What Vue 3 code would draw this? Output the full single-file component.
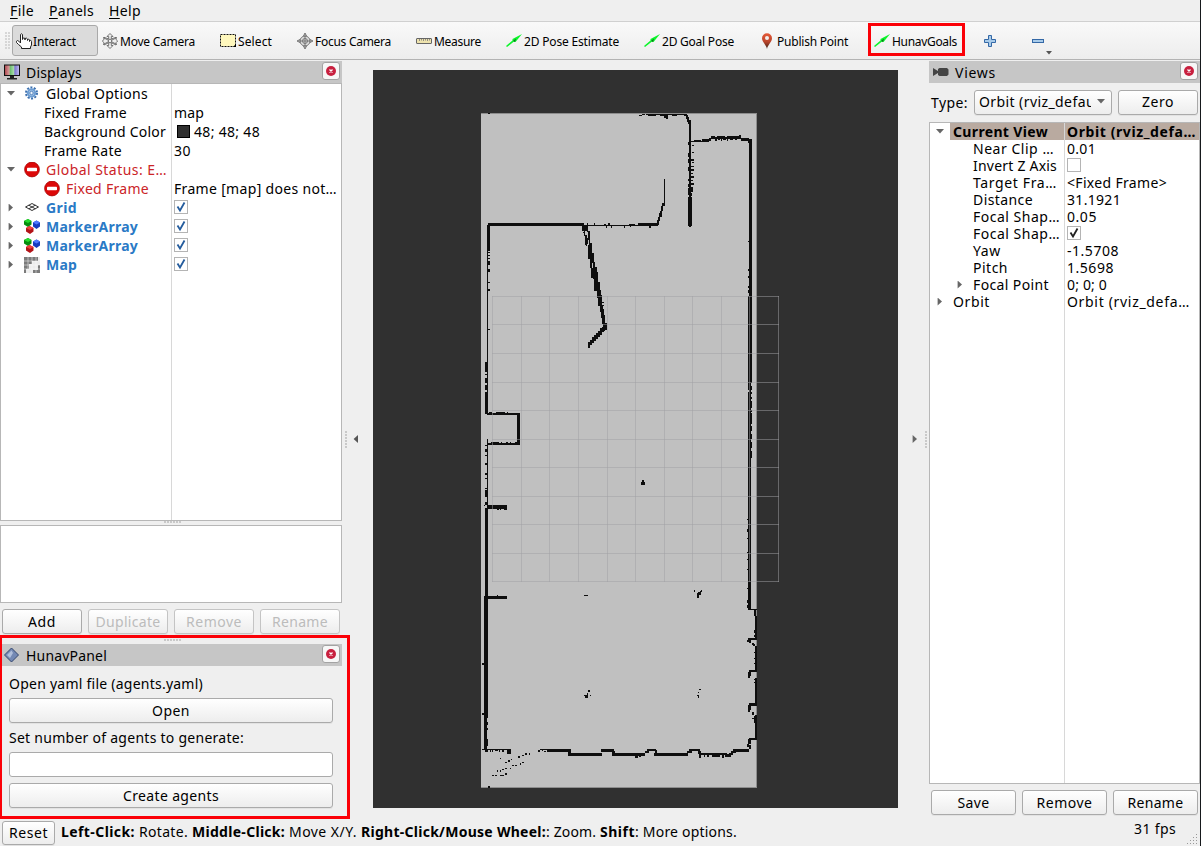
<script setup>
// Spreads a label evenly so that it occupies the given width in pixels.
const vFit = {
  mounted(el, { value }) {
    if (!value) return
    const natural = el.getBoundingClientRect().width
    el.style.letterSpacing = (value - natural) / el.textContent.length + 'px'
  },
}

const menus = [
  { key: 'F', rest: 'ile', w: 24 },
  { key: 'P', rest: 'anels', w: 45 },
  { key: 'H', rest: 'elp', w: 32 },
]

const tools = [
  { icon: 'hand', text: 'Interact', w: 43, active: true },
  { icon: 'move', text: 'Move Camera', w: 75 },
  { icon: 'select', text: 'Select', w: 34 },
  { icon: 'focus', text: 'Focus Camera', w: 76 },
  { icon: 'ruler', text: 'Measure', w: 47 },
  { icon: 'arrow', text: '2D Pose Estimate', w: 95 },
  { icon: 'arrow', text: '2D Goal Pose', w: 72 },
  { icon: 'pin', text: 'Publish Point', w: 71 },
  { icon: 'arrow', text: 'HunavGoals', w: 65, marked: true },
  { icon: 'plus', text: '' },
  { icon: 'minus', text: '' },
]

const displays = [
  { arrow: 'down', icon: 'gear', text: 'Global Options', w: 102 },
  { text: 'Fixed Frame', w: 83, value: 'map', vw: 30 },
  { text: 'Background Color', w: 122, value: '48; 48; 48', vw: 66, swatch: true },
  { text: 'Frame Rate', w: 78, value: '30', vw: 17 },
  { arrow: 'down', icon: 'error', text: 'Global Status: E…', w: 121, tone: 'red' },
  { icon: 'error', nested: true, text: 'Fixed Frame', w: 83, tone: 'red', value: 'Frame [map] does not…', vw: 163 },
  { arrow: 'right', icon: 'grid', text: 'Grid', w: 31, tone: 'blue', check: true },
  { arrow: 'right', icon: 'cubes', text: 'MarkerArray', w: 92, tone: 'blue', check: true },
  { arrow: 'right', icon: 'cubes', text: 'MarkerArray', w: 92, tone: 'blue', check: true },
  { arrow: 'right', icon: 'map', text: 'Map', w: 31, tone: 'blue', check: true },
]

const views = [
  { arrow: 'down', text: 'Current View', w: 95, value: 'Orbit (rviz_defa…', vw: 129, head: true },
  { sub: true, text: 'Near Clip …', w: 81, value: '0.01', vw: 29 },
  { sub: true, text: 'Invert Z Axis', w: 84, box: true },
  { sub: true, text: 'Target Fra…', w: 84, value: '<Fixed Frame>', vw: 100 },
  { sub: true, text: 'Distance', w: 60, value: '31.1921', vw: 54 },
  { sub: true, text: 'Focal Shap…', w: 87, value: '0.05', vw: 30 },
  { sub: true, text: 'Focal Shap…', w: 87, box: true, checked: true },
  { sub: true, text: 'Yaw', w: 28, value: '-1.5708', vw: 52 },
  { sub: true, text: 'Pitch', w: 35, value: '1.5698', vw: 47 },
  { sub: true, arrow: 'right', text: 'Focal Point', w: 76, value: '0; 0; 0', vw: 40 },
  { arrow: 'right', text: 'Orbit', w: 37, value: 'Orbit (rviz_defa…', vw: 123 },
]

const hints = [
  { b: true, text: 'Left-Click: ', w: 78 },
  { text: 'Rotate. ', w: 53 },
  { b: true, text: 'Middle-Click: ', w: 97 },
  { text: 'Move X/Y. ', w: 72 },
  { b: true, text: 'Right-Click/Mouse Wheel:', w: 185 },
  { text: ': Zoom. ', w: 54 },
  { b: true, text: 'Shift', w: 35 },
  { text: ': More options.', w: 102 },
]

const gridX = [492.5, 521.5, 549.5, 578.5, 607, 635.5, 664, 692.5, 721.5, 749.5, 778.5]
const gridY = [296.5, 324.5, 353.5, 382, 410.5, 439, 467.5, 496.5, 524.5, 553.5, 581.5]

// Occupied cells of the floor plan: x, y, width, height.
const walls = [
  [639, 115, 3, 1], [642, 114, 3, 1], [646, 114, 38, 1], [648, 115, 8, 1], [660, 115, 8, 1], [672, 115, 5, 1],
  [664, 116, 4, 2], [666, 118, 2, 1], [684, 114, 3, 2], [686, 115, 2, 4], [687, 117, 2, 5], [688, 120, 3, 4],
  [689, 124, 2, 103], [688, 142, 2, 3], [688, 153, 1, 4], [688, 159, 2, 4], [688, 167, 3, 4], [688, 179, 2, 2],
  [688, 184, 2, 3], [688, 188, 1, 7], [688, 197, 4, 29], [691, 141, 2, 1], [692, 145, 2, 1], [692, 152, 2, 1],
  [691, 159, 3, 2], [692, 162, 2, 1], [691, 166, 3, 1], [691, 169, 3, 2], [691, 173, 2, 1], [691, 176, 3, 2],
  [691, 180, 2, 1], [691, 183, 3, 2], [691, 187, 2, 5], [691, 193, 1, 3],
  [692, 141, 17, 1], [694, 140, 7, 1], [702, 139, 7, 2], [709, 138, 2, 3], [711, 136, 4, 3], [715, 137, 26, 2],
  [717, 136, 8, 1], [727, 136, 14, 1], [739, 135, 2, 3], [715, 139, 2, 2], [718, 139, 2, 1], [721, 139, 1, 2],
  [723, 139, 3, 1], [727, 139, 1, 2], [730, 139, 3, 1], [735, 139, 2, 1], [741, 138, 8, 3], [748, 139, 4, 4],
  [749, 142, 3, 216], [748, 241, 1, 1], [748, 269, 1, 2], [748, 276, 1, 2], [748, 286, 1, 2], [748, 290, 1, 3],
  [748, 296, 1, 94], [748, 392, 3, 218], [749, 358, 2, 34], [751, 354, 1, 29], [751, 386, 1, 4], [751, 392, 1, 2],
  [751, 397, 1, 2], [751, 401, 1, 7], [751, 410, 1, 2], [751, 413, 1, 11], [751, 426, 1, 5], [751, 434, 1, 5],
  [751, 442, 1, 6], [751, 451, 1, 7], [747, 519, 1, 1], [747, 529, 1, 3], [747, 538, 1, 1], [747, 552, 1, 1],
  [747, 559, 1, 1], [747, 569, 1, 1], [747, 588, 1, 1], [747, 600, 1, 3], [747, 605, 1, 3],
  [748, 609, 9, 1], [754, 610, 2, 6], [755, 616, 2, 22], [754, 630, 2, 3], [754, 635, 1, 2], [748, 638, 9, 2],
  [747, 640, 4, 2], [749, 641, 2, 2], [752, 643, 2, 2], [753, 644, 2, 2], [755, 646, 2, 24], [754, 652, 1, 1],
  [754, 658, 1, 1], [754, 663, 1, 1], [749, 670, 8, 2], [748, 672, 3, 4], [748, 675, 2, 3], [754, 679, 1, 1],
  [754, 682, 1, 1], [755, 678, 2, 25], [749, 703, 8, 3], [748, 705, 3, 5], [748, 709, 2, 3], [752, 712, 2, 3],
  [754, 716, 2, 7], [752, 718, 2, 1], [755, 715, 2, 24], [749, 738, 8, 2], [748, 739, 3, 5], [747, 744, 2, 3], [749, 745, 2, 4],
  [733, 749, 16, 3], [731, 751, 5, 2], [729, 753, 4, 2], [727, 754, 4, 3], [699, 753, 2, 5], [701, 753, 26, 2],
  [704, 755, 1, 2], [707, 755, 2, 2], [712, 755, 8, 2], [722, 755, 2, 3], [725, 755, 2, 2],
  [689, 749, 11, 2], [687, 751, 5, 2], [698, 751, 3, 3], [654, 753, 34, 3], [647, 749, 9, 2], [645, 751, 4, 2],
  [655, 750, 2, 4], [612, 753, 33, 3], [635, 756, 3, 2], [639, 756, 2, 1], [601, 749, 13, 3], [612, 751, 3, 3],
  [568, 753, 34, 3], [568, 749, 3, 5], [547, 749, 22, 3], [540, 749, 7, 1], [542, 750, 1, 1], [538, 750, 2, 2],
  [544, 751, 2, 1], [482, 749, 28, 1], [485, 750, 3, 2], [490, 750, 1, 2], [492, 750, 1, 2], [495, 750, 3, 1],
  [499, 750, 1, 2], [502, 750, 2, 2], [507, 749, 4, 5],
  [484, 598, 3, 151], [487, 596, 1, 122], [487, 722, 1, 3], [487, 728, 1, 2], [487, 739, 1, 7],
  [482, 663, 2, 2], [482, 713, 2, 2], [485, 508, 3, 90], [487, 505, 20, 4], [497, 509, 2, 1], [500, 509, 1, 1],
  [504, 509, 3, 1], [487, 596, 20, 3], [497, 595, 1, 1], [484, 505, 1, 1], [484, 596, 1, 2],
  [487, 225, 1, 190], [488, 225, 2, 18], [488, 243, 2, 8], [488, 252, 2, 1], [488, 255, 2, 1], [488, 258, 2, 1],
  [488, 261, 2, 4], [488, 269, 2, 3], [488, 282, 2, 1], [488, 289, 2, 2], [488, 329, 2, 1],
  [485, 362, 3, 10], [485, 374, 2, 1], [485, 378, 2, 5], [485, 385, 2, 5], [485, 392, 3, 22],
  [487, 413, 33, 2], [489, 412, 3, 1], [496, 412, 9, 1], [507, 412, 1, 1], [517, 413, 3, 32], [487, 443, 33, 2],
  [491, 442, 8, 1], [501, 442, 1, 1], [506, 442, 2, 1], [510, 442, 1, 1], [515, 442, 3, 1],
  [487, 439, 1, 68], [485, 445, 2, 1], [485, 449, 2, 3], [485, 455, 2, 1], [485, 463, 2, 2], [485, 473, 2, 2],
  [485, 478, 2, 1], [485, 488, 2, 1], [485, 490, 2, 7], [485, 502, 2, 3],
  [488, 223, 96, 3], [582, 225, 3, 6], [584, 225, 54, 1], [587, 223, 1, 2], [594, 223, 1, 2], [604, 224, 2, 1],
  [608, 223, 2, 2], [606, 226, 1, 2], [611, 226, 1, 2], [624, 226, 1, 2], [630, 226, 1, 1], [629, 224, 6, 1],
  [638, 223, 20, 3], [649, 226, 2, 2], [664, 179, 1, 25],
  [657, 220, 2, 5], [658, 217, 2, 4], [659, 213, 3, 4], [660, 211, 2, 3], [661, 206, 2, 5], [662, 203, 3, 3],
  [642, 480, 2, 3], [641, 482, 4, 3], [584, 595, 4, 1], [694, 590, 1, 2], [701, 590, 1, 2], [698, 592, 3, 3],
  [697, 593, 2, 5], [700, 591, 1, 2], [588, 690, 2, 2], [584, 695, 4, 1], [587, 693, 1, 4], [585, 696, 3, 2],
  [590, 695, 1, 1], [699, 689, 2, 1], [698, 692, 1, 1], [697, 695, 2, 1], [698, 696, 1, 2],
  [500, 758, 1, 1], [505, 762, 2, 1], [508, 760, 2, 2], [511, 759, 1, 1], [518, 756, 2, 2], [522, 755, 2, 1],
  [525, 753, 2, 2], [529, 753, 1, 2], [512, 765, 2, 1], [515, 765, 2, 1], [520, 763, 1, 2], [522, 762, 2, 1],
  [497, 770, 1, 2], [500, 770, 1, 2], [502, 769, 2, 1], [505, 768, 2, 1], [510, 768, 1, 1], [492, 775, 2, 1],
  [495, 775, 2, 1], [500, 775, 4, 1], [505, 773, 2, 2], [488, 786, 2, 2], [488, 113, 2, 1],
  // Slanted door
  [582, 226, 3, 5], [585, 225, 2, 6], [583, 232, 1, 1], [584, 231, 1, 5], [585, 235, 2, 6], [585, 240, 2, 5], [586, 244, 1, 2],
  [587, 226, 1, 6], [588, 231, 2, 9], [587, 238, 1, 6], [588, 245, 2, 8], [589, 239, 1, 8], [590, 243, 2, 10], [588, 252, 3, 7],
  [591, 253, 3, 10], [590, 258, 2, 10], [593, 262, 2, 8], [591, 268, 4, 10], [595, 267, 2, 8], [595, 272, 3, 5],
  [593, 276, 2, 3], [594, 277, 4, 14], [598, 282, 2, 9], [596, 285, 2, 6], [597, 290, 4, 8], [599, 295, 3, 11],
  [602, 302, 2, 1], [602, 305, 2, 1], [598, 298, 3, 8], [600, 306, 3, 6], [601, 309, 3, 9], [602, 315, 3, 9],
  [603, 323, 4, 7], [602, 327, 3, 4], [600, 328, 4, 4], [598, 331, 4, 4], [596, 333, 4, 4], [594, 335, 4, 4],
  [592, 337, 4, 4], [590, 340, 4, 3], [588, 342, 4, 3], [588, 345, 2, 3],
]
</script>

<template>
  <div class="app">
    <nav class="menubar">
      <span v-for="m in menus" :key="m.key" v-fit="m.w"><u>{{ m.key }}</u>{{ m.rest }}</span>
    </nav>

    <div class="toolbar">
      <i class="handle"></i>
      <div v-for="(t, i) in tools" :key="i" class="tool" :class="{ active: t.active, marked: t.marked }">
        <svg class="ticon" viewBox="0 0 16 16">
          <path v-if="t.icon === 'hand'" d="M4.500 10V1.500Q5.500 0 6.500 1.500V6.500V5.500Q8 4.500 9 5.500V7V5.500Q10.500 4.500 11.500 6V7.500V6.500Q13 5.500 13.500 7V8.500V7.500Q15 6.500 15.500 8.500V12L14.500 14V15.500H5.500V14L2.500 11.500L.5 9.500Q0 8 1.500 7.500Q2.500 7.500 4.500 10" fill="#fff" stroke="#222" stroke-width="1" />
          <g v-else-if="t.icon === 'move'" fill="#eee" stroke="#666" stroke-width=".9">
            <path d="M8 .5L11 3.500H9.300V6L14 4.300V6.500L15.700 8L14 9.700V12L9.300 9.700V12.500H11L8 15.500L5 12.500H6.700V9.700L2 12V9.700L.3 8L2 6.500V4.300L6.700 6V3.500H5Z" />
            <path d="M1 4.500L15 11.500M15 4.500L1 11.500" /><circle cx="8" cy="8" r="1.800" />
          </g>
          <g v-else-if="t.icon === 'select'">
            <rect x=".5" y="1.500" width="15" height="12" fill="#fff8bd" stroke="#111" stroke-dasharray="2 1" />
            <path d="M16 11V14H13Z" />
          </g>
          <g v-else-if="t.icon === 'focus'" fill="#ddd" stroke="#777">
            <circle cx="8" cy="8" r="5" /><circle cx="8" cy="8" r="2.500" />
            <path d="M8 3V13M3 8H13" /><path d="M6.500 3L8 0L9.500 3ZM6.500 13L8 16L9.500 13ZM3 6.500L0 8L3 9.500ZM13 6.500L16 8L13 9.500Z" fill="#bbb" />
          </g>
          <g v-else-if="t.icon === 'ruler'">
            <rect x=".5" y="5.500" width="15" height="5" rx=".5" fill="#eee3ae" stroke="#666" />
            <path d="M3.500 6V8M5.500 6V7.500M7.500 6V8M9.500 6V7.500M11.500 6V8M13.500 6V7.500" stroke="#777" stroke-width=".8" />
          </g>
          <g v-else-if="t.icon === 'arrow'">
            <path d="M0 13L6.500 7.500L6.500 6L16 1L9.500 9L8 8.500L1 14Z" fill="#0cf52b" />
            <path d="M7 8L10 5.500L9 9Z" fill="#067c18" />
          </g>
          <g v-else-if="t.icon === 'pin'">
            <path d="M8 16C7.500 12 3 9 3 5.200A5 5 0 0 1 13 5.200C13 9 8.500 12 8 16Z" fill="url(#pinfill)" />
            <circle cx="8" cy="5" r="2" fill="#f2efee" />
          </g>
          <path v-else-if="t.icon === 'plus'" d="M5.500 2.500H8.500V6.500H12.500V9.500H8.500V13.500H5.500V9.500H1.500V6.500H5.500Z" fill="#a8cbea" stroke="#3468a6" />
          <rect v-else x="1.500" y="6.500" width="11" height="3" fill="#a8cbea" stroke="#3468a6" />
        </svg>
        <span v-if="t.text" v-fit="t.w">{{ t.text }}</span>
        <svg v-if="t.icon === 'minus'" class="drop" viewBox="0 0 6 4"><path d="M0 0H6L3 3.500Z" fill="#555" /></svg>
      </div>
    </div>

    <svg width="0" height="0" class="defs">
      <defs>
        <linearGradient id="pinfill" x2="0" y2="1"><stop stop-color="#e65937" /><stop offset=".55" stop-color="#b9452c" /><stop offset="1" stop-color="#352014" /></linearGradient>
        <linearGradient id="scr"><stop stop-color="#ab4249" /><stop offset=".33" stop-color="#d9a1a1" /><stop offset=".34" stop-color="#62b967" /><stop offset=".66" stop-color="#b3e1b5" /><stop offset=".67" stop-color="#7770ce" /><stop offset="1" stop-color="#c6c2f0" /></linearGradient>
      </defs>
    </svg>

    <main class="body">
      <aside class="left">
        <header class="title">
          <svg width="16" height="16" viewBox="0 0 16 16"><rect x=".5" y="1" width="15" height="10.500" fill="url(#scr)" stroke="#111" /><path d="M6 12H10V14H13V15.500H3V14H6Z" fill="#222" /></svg>
          <span v-fit="56">Displays</span>
          <button class="close"><svg viewBox="0 0 10 10"><circle cx="5" cy="5" r="5" fill="#c8203f" /><path d="M3.500 3.500L6.500 6.500M6.500 3.500L3.500 6.500" stroke="#fff" stroke-width="1.300" /></svg></button>
        </header>

        <section class="tree disp">
          <div v-for="(r, i) in displays" :key="i" class="row">
            <div class="name" :class="[r.tone, { plain: !r.icon, nested: r.nested, bold: r.tone === 'blue' }]">
              <i class="tri" :class="r.arrow"></i>
              <svg v-if="r.icon" class="ricon" viewBox="0 0 16 16">
                <g v-if="r.icon === 'gear'" fill="none" stroke="#3b6fae">
                  <circle cx="7.500" cy="7" r="5.500" stroke-width="2" stroke-dasharray="2 1.450" />
                  <circle cx="7.500" cy="7" r="3.700" fill="#a9c8e9" stroke="#6d9dd2" stroke-width="2" />
                  <circle cx="7.500" cy="7" r="1.700" fill="#eef5fb" stroke="#3b6fae" stroke-width=".8" />
                </g>
                <g v-else-if="r.icon === 'error'">
                  <circle cx="8" cy="7.500" r="7.400" fill="#dc0808" stroke="#a80707" stroke-width=".8" />
                  <rect x="3" y="5.800" width="10" height="3.400" rx=".8" fill="#fff" />
                </g>
                <g v-else-if="r.icon === 'grid'" fill="none" stroke="#333" stroke-width="1">
                  <path d="M1.500 7L8 3.500L14.500 7L8 10.500ZM4.800 5.200L11.300 8.800M11.300 5.200L4.800 8.800" />
                </g>
                <g v-else-if="r.icon === 'cubes'">
                  <path d="M0 2L4 0L7.500 2V5.500L4 8L0 5.500Z" fill="#078d0e" /><path d="M0 2L4 0L7.500 2L4 4Z" fill="#25dd2e" />
                  <path d="M9 3.500L12.500 1.500L16 3.500V7.500L12.500 10L9 7.500Z" fill="#163bc0" /><path d="M9 3.500L12.500 1.500L16 3.500L12.500 5.500Z" fill="#4e78ff" />
                  <path d="M2 9L5.500 7L9.500 9V12.500L6 15L2 12.500Z" fill="#b31318" /><path d="M2 9L5.500 7L9.500 9L6 11Z" fill="#f03e3e" />
                </g>
                <g v-else>
                  <path d="M0 0H16V16H0Z" fill="#ececec" /><path d="M0 0H14V4H8V7H5V12H2V16H0ZM9 13H16V16H9ZM14 8H16V13H14Z" fill="#7b7b7b" />
                  <path d="M0 4H16M0 8H16M0 12H16M4 0V16M8 0V16M12 0V16" stroke="#fff" stroke-width=".5" />
                </g>
              </svg>
              <span v-fit="r.w">{{ r.text }}</span>
            </div>
            <div class="val">
              <i v-if="r.swatch" class="swatch"></i>
              <svg v-if="r.check" class="check" viewBox="0 0 14 14"><rect x=".5" y=".5" width="13" height="13" fill="#fff" stroke="#b4b4b4" /><path d="M3.500 6.500L6 10.500L10.500 2.500" fill="none" stroke="#245c9d" stroke-width="1.800" /></svg>
              <span v-if="r.value" v-fit="r.vw">{{ r.value }}</span>
            </div>
          </div>
        </section>

        <i class="dots"></i>
        <section class="desc"></section>
        <div class="btns">
          <button class="btn"><span v-fit="28">Add</span></button>
          <button class="btn off"><span v-fit="65">Duplicate</span></button>
          <button class="btn off"><span v-fit="56">Remove</span></button>
          <button class="btn off"><span v-fit="56">Rename</span></button>
        </div>

        <section class="hunav">
          <i class="dots"></i>
          <header class="title">
            <svg width="16" height="16" viewBox="0 0 16 16"><path d="M.5 8L7.500 1L14.500 8L7.500 15Z" fill="#7489b4" stroke="#34466e" /><path d="M3 8L7.500 3.500L9 6L6 11Z" fill="#b0bfdb" /></svg>
            <span v-fit="81">HunavPanel</span>
            <button class="close"><svg viewBox="0 0 10 10"><circle cx="5" cy="5" r="5" fill="#c8203f" /><path d="M3.500 3.500L6.500 6.500M6.500 3.500L3.500 6.500" stroke="#fff" stroke-width="1.300" /></svg></button>
          </header>
          <div class="form">
            <label><span v-fit="194">Open yaml file (agents.yaml)</span></label>
            <button class="btn"><span v-fit="38">Open</span></button>
            <label><span v-fit="235">Set number of agents to generate:</span></label>
            <input class="field" />
            <button class="btn last"><span v-fit="96">Create agents</span></button>
          </div>
        </section>
      </aside>

      <div class="splitter"><i class="vdots"></i><i class="tri left-tri"></i></div>

      <svg class="scene" viewBox="373 70 525 738" shape-rendering="crispEdges">
        <rect x="373" y="70" width="525" height="738" fill="#303030" />
        <rect x="481" y="113" width="276" height="675" fill="#c0c0c0" />
        <path d="M481 113.500H756.500V787.500H481" fill="none" stroke="#8d8d8d" />
        <g fill="#0e0e0e"><rect v-for="(w, i) in walls" :key="i" :x="w[0]" :y="w[1]" :width="w[2]" :height="w[3]" /></g>
        <g stroke="#a0a0a4" stroke-opacity=".5">
          <path v-for="x in gridX" :key="'x' + x" :d="`M${x} 296V582`" />
          <path v-for="y in gridY" :key="'y' + y" :d="`M492 ${y}H779`" />
        </g>
      </svg>

      <div class="splitter rs"><i class="tri right"></i><i class="vdots"></i></div>

      <aside class="right-dock">
        <header class="title">
          <svg width="16" height="16" viewBox="0 0 16 16"><path d="M0 4L5 7V5L6.500 4H14L15.500 5.500V10.500L14 12H6.500L5 11V9L0 12Z" fill="#444" /></svg>
          <span v-fit="41">Views</span>
          <button class="close"><svg viewBox="0 0 10 10"><circle cx="5" cy="5" r="5" fill="#c8203f" /><path d="M3.500 3.500L6.500 6.500M6.500 3.500L3.500 6.500" stroke="#fff" stroke-width="1.300" /></svg></button>
        </header>
        <div class="typebar">
          <span v-fit="37">Type:</span>
          <div class="btn combo"><div class="clip"><span v-fit="116">Orbit (rviz_defau</span></div><i class="tri down"></i></div>
          <button class="btn zero"><span v-fit="32">Zero</span></button>
        </div>
        <section class="tree vtree">
          <div v-for="(r, i) in views" :key="i" class="row" :class="{ head: r.head }">
            <div class="name" :class="{ sub: r.sub }"><i class="tri" :class="r.arrow"></i><span v-fit="r.w">{{ r.text }}</span></div>
            <div class="val">
              <svg v-if="r.box" class="check" viewBox="0 0 14 14"><rect x=".5" y=".5" width="13" height="13" fill="#fff" stroke="#b4b4b4" /><path v-if="r.checked" d="M3.500 6.500L6 10.500L10.500 2.500" fill="none" stroke="#222" stroke-width="1.800" /></svg>
              <span v-else v-fit="r.vw">{{ r.value }}</span>
            </div>
          </div>
        </section>
        <div class="btns">
          <button class="btn"><span v-fit="32">Save</span></button>
          <button class="btn"><span v-fit="56">Remove</span></button>
          <button class="btn"><span v-fit="56">Rename</span></button>
        </div>
      </aside>
    </main>

    <footer class="status">
      <button class="btn"><span v-fit="39">Reset</span></button>
      <div class="hints"><component :is="h.b ? 'b' : 'span'" v-for="h in hints" :key="h.text" v-fit="h.w">{{ h.text }}</component></div>
      <span class="fps" v-fit="42">31 fps</span>
      <svg class="grip" viewBox="0 0 11 11"><path d="M9 1.500h1M6 4.500h1M9 4.500h1M3 7.500h1M6 7.500h1M9 7.500h1M0 10.500h1M3 10.500h1M6 10.500h1M9 10.500h1" stroke="#999" /></svg>
    </footer>
  </div>
</template>

<style>
html, body { background: #efefef; overflow: hidden; }
</style>

<style scoped>
* { box-sizing: border-box; }
.app { width: 1201px; height: 846px; display: flex; flex-direction: column; position: relative; background: #efefef; border-right: 1px solid #16191c; color: #000; font: 14px/19px "Noto Sans", "Open Sans", sans-serif; overflow: hidden; }
span, b { white-space: pre; }
svg { display: block; flex: none; }
.defs { position: absolute; }
button { font: inherit; color: inherit; }

.menubar { height: 22px; flex: none; display: flex; gap: 15px; padding: 1px 0 0 10px; line-height: 20px; border-bottom: 1px solid #d0d0d0; }
.menubar u { text-underline-offset: 2px; }

.toolbar { height: 38px; flex: none; display: grid; grid-template-columns: 16px 86px 118px 77px 119px 90px 138px 115px 115px 109px 48px 30px; align-items: center; background: linear-gradient(#f9f9f9, #ededed); border-bottom: 1px solid #b3b3b3; font-size: 12px; line-height: 18px; }
.handle { width: 5px; height: 17px; margin-left: 5px; background: radial-gradient(circle at 1px 1px, #ccc .6px, transparent 1px) 0 0 / 3px 3px; }
.tool { display: flex; align-items: center; gap: 2px; height: 30px; position: relative; }
.tool span { padding-top: 2px; }
.ticon { width: 16px; height: 16px; }
.active { height: 31px; width: 86px; margin-left: -4px; padding-left: 4px; border: 1px solid #a9a9a9; border-radius: 3px; background: #dbdbdb; }
.active .ticon { margin-left: -1px; }
.active span { margin-left: -1px; }
.marked { width: 97px; height: 33px; margin: -3px 0 0 -6px; padding: 3px 0 0 3px; border: 3px solid #fb0007; }
.drop { position: absolute; left: 15px; top: 25px; width: 6px; height: 4px; }

.body { flex: 1; display: flex; min-height: 0; padding-top: 1px; }
.left { width: 342px; flex: none; display: flex; flex-direction: column; }
.title { height: 22px; flex: none; display: flex; align-items: center; gap: 6px; padding: 0 2px 0 4px; background: #c6c6c6; }
.close { width: 18px; height: 18px; margin: -3px 0 0 auto; padding: 3px; border: 1px solid #a3a3a3; border-radius: 3px; background: #f7f7f7; }

.tree { background: #fff; border: 1px solid #b7b7b7; overflow: hidden; }
.row { display: flex; }
.disp { height: 438px; flex: none; background: linear-gradient(#d8d8d8, #d8d8d8) 170px 0 / 1px 100% no-repeat #fff; }
.disp .row { height: 19px; }
.name { display: flex; align-items: center; flex: none; }
.disp .name { width: 171px; padding-left: 6px; gap: 6px; }
.disp .name .tri { margin-right: 3px; }
.disp .plain { padding-left: 43px; gap: 0; }
.disp .plain .tri, .disp .nested .tri { display: none; }
.disp .nested { padding-left: 43px; }
.ricon { width: 16px; height: 16px; }
.red { color: #cb2428; }
.blue { color: #2a7ac6; }
.bold { font-weight: 700; }
.val { display: flex; align-items: center; padding-left: 2px; }
.check { width: 14px; height: 14px; margin-bottom: 1px; }
.swatch { width: 13px; height: 13px; margin: 0 4px 0 3px; background: #303030; border: 1px solid #000; }
.tri { width: 8px; height: 8px; flex: none; }
.tri.down { background: #666; clip-path: polygon(0 20%, 100% 20%, 50% 75%); }
.tri.right { background: #666; clip-path: polygon(20% 0, 75% 50%, 20% 100%); }
.left-tri { background: #555; clip-path: polygon(75% 0, 20% 50%, 75% 100%); }

.dots { display: block; width: 17px; height: 4px; flex: none; margin-left: 164px; background: radial-gradient(circle at 1px 1px, #bbb .6px, transparent 1px) 0 0 / 3px 4px; }
.desc { height: 78px; flex: none; background: #fff; border: 1px solid #b7b7b7; }
.btns { display: flex; gap: 6px; padding: 6px 2px 0; }
.btns .btn { flex: 1; }
.btn { display: flex; align-items: center; justify-content: center; height: 25px; padding: 0 0 1px; border: 1px solid #aaa; border-radius: 3px; background: linear-gradient(#fff, #ededed); box-shadow: 0 1px 0 #e2e2e2; }
.off { color: #bcbcbc; border-color: #c4c4c4; }

.hunav { width: 350px; height: 184px; flex: none; margin-top: 1px; border: 3px solid #fb0007; border-left-width: 2px; }
.hunav .dots { margin: 1px 0 1px 162px; }
.hunav .title { width: 340px; padding-left: 2px; }
.form { display: flex; flex-direction: column; padding: 8px 14px 0 7px; }
.form label { height: 24px; line-height: 20px; }
.form .btn + label { margin-top: 5px; }
.form .last { margin-top: 6px; }
.field { height: 25px; border: 1px solid #aaa; border-radius: 3px; background: #fff; outline: 0; }

.splitter { width: 31px; flex: none; display: flex; align-items: center; gap: 4px; padding-left: 3px; padding-bottom: 29px; }
.vdots { width: 3px; height: 17px; background: radial-gradient(circle at 1px 1px, #bbb .6px, transparent 1px) 0 0 / 4px 3px; }
.rs { padding-left: 13px; gap: 6px; }
.scene { width: 525px; height: 738px; margin-top: 9px; }

.right-dock { flex: 1; display: flex; flex-direction: column; }
.typebar { display: flex; align-items: center; height: 40px; padding: 0 2px 2px; }
.combo { width: 138px; margin-left: 6px; padding: 0 6px 1px 4px; justify-content: space-between; }
.clip { width: 112px; overflow: hidden; }
.zero { width: 80px; margin-left: auto; }
.vtree { height: 662px; margin-top: -1px; background: linear-gradient(#d8d8d8, #d8d8d8) 134px 0 / 1px 100% no-repeat #fff; }
.vtree .row { height: 17px; line-height: 17px; }
.vtree .name { width: 135px; padding-left: 6px; gap: 9px; }
.vtree .sub { padding-left: 26px; }
.vtree .head { font-weight: 700; background: linear-gradient(#d8d8d8, #d8d8d8) 134px 0 / 1px 100% no-repeat, linear-gradient(90deg, #fff 20px, #b9aaa0 20px); }
.right-dock .btns { padding-left: 2px; }

.status { position: absolute; left: 0; right: 0; top: 820px; height: 26px; display: flex; align-items: center; padding-left: 2px; }
.status .btn { width: 53px; height: 24px; padding-bottom: 2px; }
.hints { display: flex; margin: -3px 0 0 6px; }
.fps { margin: -9px 24px 0 auto; }
.grip { position: absolute; right: 2px; bottom: 2px; width: 11px; height: 11px; }
</style>
